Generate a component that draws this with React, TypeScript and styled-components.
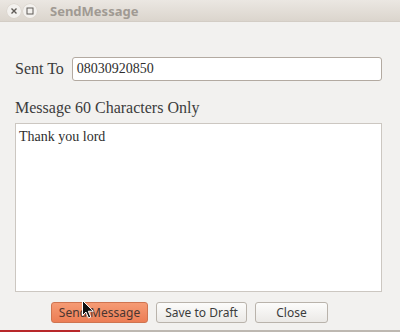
import React from "react";
import styled, { createGlobalStyle } from "styled-components";

const GlobalStyle = createGlobalStyle`
  html, body {
    margin: 0;
    padding: 0;
    width: 400px;
    height: 332px;
    overflow: hidden;
    background: #f2f1ef;
  }
`;

const Window = styled.div`
  position: relative;
  width: 400px;
  height: 332px;
  display: flex;
  flex-direction: column;
  background: #f2f1ef;
`;

const TitleBar = styled.div`
  height: 22px;
  display: flex;
  align-items: center;
  padding-left: 7px;
  gap: 2px;
  background: linear-gradient(#ebe7e2, #dbd5cd);
  border-bottom: 1px solid #d3cdc5;
  box-sizing: border-box;
`;

const WinButton = styled.div`
  width: 14px;
  height: 14px;
  border-radius: 50%;
  background: #f3f1ee;
  box-shadow: 0 0 0 0.5px #d6d0c8;
  display: flex;
  align-items: center;
  justify-content: center;
`;

const Title = styled.span`
  margin-left: 11px;
  font-family: "Noto Sans", "DejaVu Sans", sans-serif;
  font-weight: bold;
  font-size: 13px;
  color: #a09a93;
`;

const Body = styled.div`
  display: flex;
  flex-direction: column;
  padding: 35px 18px 0 15px;
`;

const Row = styled.div`
  display: flex;
  align-items: center;
  gap: 8px;
`;

const Label = styled.span`
  font-family: "Liberation Serif", serif;
  font-size: 16px;
  color: #3c3c3c;
`;

const TextInput = styled.div`
  flex: 1;
  height: 24px;
  box-sizing: border-box;
  border: 1px solid #b3aaa1;
  border-radius: 3px;
  background: #fff;
  display: flex;
  align-items: center;
  padding-left: 4px;
  font-family: "Liberation Serif", serif;
  font-size: 14px;
  color: #2e2e2e;
`;

const MessageLabel = styled(Label)`
  margin-top: 17px;
  line-height: 20px;
`;

const TextArea = styled.div`
  margin-top: 5px;
  height: 169px;
  box-sizing: border-box;
  border: 1px solid #ccc7c1;
  background: #fff;
  padding: 5px 3px;
  font-family: "Liberation Serif", serif;
  font-size: 14px;
  color: #2e2e2e;
`;

const ButtonRow = styled.div`
  display: flex;
  gap: 8px;
  padding-left: 51px;
  margin-top: 10px;
`;

const Button = styled.div<{ $primary?: boolean; $w: number }>`
  width: ${(p) => p.$w}px;
  height: 21px;
  box-sizing: border-box;
  border-radius: 3px;
  border: 1px solid ${(p) => (p.$primary ? "#cf7450" : "#b9b3ab")};
  background: ${(p) =>
    p.$primary
      ? "linear-gradient(#f59b74, #ec7d55)"
      : "linear-gradient(#fcfcfb, #ebe9e6)"};
  display: flex;
  align-items: center;
  justify-content: center;
  font-family: "Noto Sans", "DejaVu Sans", sans-serif;
  font-size: 12px;
  color: ${(p) => (p.$primary ? "#4a3530" : "#3c3c3c")};
`;

const BottomStrip = styled.div`
  margin-top: auto;
  height: 2px;
  display: flex;
  background: #bdb8b1;
`;

const RedPart = styled.div`
  width: 80px;
  background: #b8282a;
`;

const Cursor = styled.svg`
  position: absolute;
  left: 82px;
  top: 300px;
`;

export default function App() {
  return (
    <Window>
      <GlobalStyle />
      <TitleBar>
        <WinButton>
          <svg width="8" height="8" viewBox="0 0 8 8">
            <path d="M1.5 1.5l5 5M6.5 1.5l-5 5" stroke="#5f5b56" strokeWidth="1.4" />
          </svg>
        </WinButton>
        <WinButton>
          <svg width="8" height="8" viewBox="0 0 8 8">
            <rect x="1" y="1" width="6" height="6" fill="none" stroke="#5f5b56" strokeWidth="1" />
          </svg>
        </WinButton>
        <Title>SendMessage</Title>
      </TitleBar>
      <Body>
        <Row>
          <Label>Sent To</Label>
          <TextInput>08030920850</TextInput>
        </Row>
        <MessageLabel>Message 60 Characters Only</MessageLabel>
        <TextArea>Thank you lord</TextArea>
      </Body>
      <ButtonRow>
        <Button $primary $w={97}>Send Message</Button>
        <Button $w={91}>Save to Draft</Button>
        <Button $w={73}>Close</Button>
      </ButtonRow>
      <BottomStrip>
        <RedPart />
      </BottomStrip>
      <Cursor width="12" height="19" viewBox="0 0 12 19">
        <path d="M0.5 0.5v15l3.5-3.5 2.5 6 2.3-1-2.5-5.8h5z" fill="#111" stroke="#fff" strokeWidth="1" />
      </Cursor>
    </Window>
  );
}
